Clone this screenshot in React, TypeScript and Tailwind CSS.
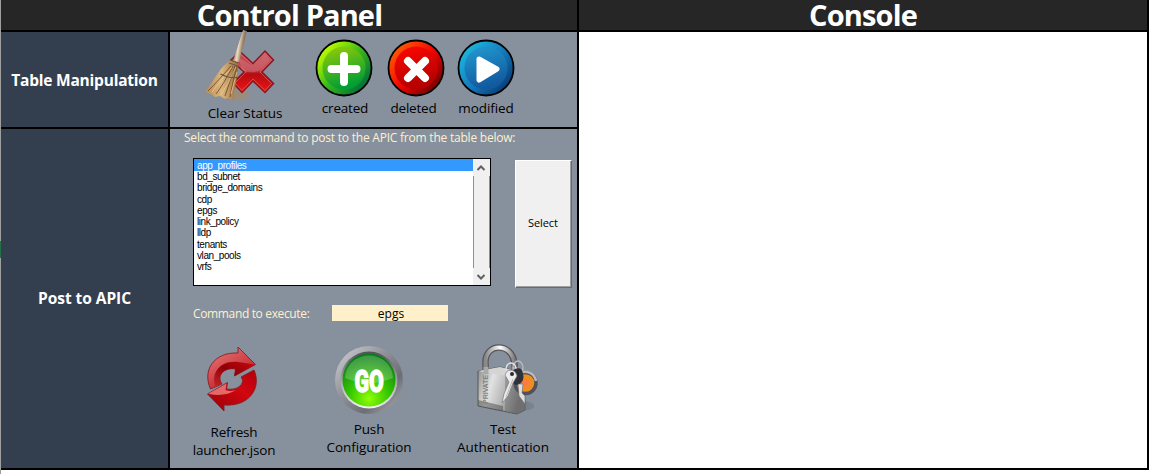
import { useState, type ReactNode } from "react";

const commands = [
  "app_profiles",
  "bd_subnet",
  "bridge_domains",
  "cdp",
  "epgs",
  "link_policy",
  "lldp",
  "tenants",
  "vlan_pools",
  "vrfs",
];

function BroomIcon() {
  return (
    <svg width="72" height="76" viewBox="203 28 72 76" className="block">
      <defs>
        <linearGradient id="crossRed" x1="0" y1="0" x2="0" y2="1">
          <stop offset="0" stopColor="#c4545c" />
          <stop offset="0.48" stopColor="#bd3a44" />
          <stop offset="0.55" stopColor="#b50c12" />
          <stop offset="1" stopColor="#ed1515" />
        </linearGradient>
        <linearGradient id="handle" x1="0" y1="0" x2="1" y2="0.35">
          <stop offset="0.3" stopColor="#9a7f66" />
          <stop offset="0.5" stopColor="#ecdcc0" />
          <stop offset="0.8" stopColor="#8d755c" />
        </linearGradient>
        <linearGradient id="straw" x1="0" y1="0" x2="1" y2="0">
          <stop offset="0" stopColor="#b98a50" />
          <stop offset="0.5" stopColor="#dcb67d" />
          <stop offset="1" stopColor="#9c6d3b" />
        </linearGradient>
        <radialGradient id="dust">
          <stop offset="0" stopColor="#a58a6b" />
          <stop offset="1" stopColor="#a58a6b" stopOpacity="0" />
        </radialGradient>
      </defs>
      <ellipse cx="239" cy="95" rx="14" ry="8" fill="url(#dust)" />
      <path d="M240 51.500 L253 63.500 L265 51 L273.500 60 L262 72 L273.500 83.500 L265 92.500 L253 81 L242 92.500 L233 83 L244 72 L231 60Z" fill="url(#crossRed)" stroke="#8e1620" strokeWidth="1.500" />
      <path d="M240 53.500 L253 65.500 L265 53 L271.500 60 L260 72 L271.500 83.500 L265 90.500 L253 79 L242 90.500 L235 83 L246 72 L233 60Z" fill="none" stroke="#e39088" strokeWidth="0.600" opacity="0.800" />
      <path d="M238 57 L253 66 L265 54 L270 60 L262 69 Q253 75 242 70Z" fill="#fff" opacity="0.14" />
      <path d="M243 30 L247 31 L239 62 L233 61Z" fill="url(#handle)" />
      <path d="M231 60 L238 62.500 C239 73 235 85 233 100 L228 98 L225 99 L220 96 L215 97 L211 94 L205 92 C214 81 220 66 231 60Z" fill="url(#straw)" />
      <path d="M231 66 Q218 81 208 91 M233 66 Q223 85 216 94 M235 66 Q230 82 225 96 M237 66 Q232 85 230 97" stroke="#75502c" strokeWidth="0.900" fill="none" />
      <path d="M232 67 Q221 80 212 92 M236 67 Q228 84 221 95 M237 72 L231 94" stroke="#ecd09c" strokeWidth="0.700" fill="none" />
      <path d="M230 60 L238 63 M229 63 L238 66 M220.500 74 Q229 78.500 237 77.500" stroke="#68584b" strokeWidth="1.300" fill="none" />
    </svg>
  );
}

function OrbIcon({ id, colors, children }: { id: string; colors: string[]; children: ReactNode }) {
  return (
    <svg width="58" height="58" viewBox="-29 -29 58 58" className="block">
      <defs>
        <linearGradient id={id + "rim"} x1="0.12" y1="0.15" x2="0.88" y2="0.85">
          <stop offset="0" stopColor={colors[0]} />
          <stop offset="0.5" stopColor={colors[1]} />
          <stop offset="1" stopColor={colors[2]} />
        </linearGradient>
        <linearGradient id={id + "in"} x1="0" y1="0" x2="0.3" y2="1">
          <stop offset="0" stopColor={colors[3]} />
          <stop offset="1" stopColor={colors[4]} />
        </linearGradient>
      </defs>
      <circle r="27.500" fill={"url(#" + id + "rim)"} stroke="#030303" strokeWidth="1.800" />
      <circle r="21.500" fill={"url(#" + id + "in)"} />
      {children}
    </svg>
  );
}

function RefreshIcon() {
  return (
    <svg width="52" height="68" viewBox="206 345 52 68" className="block">
      <defs>
        <linearGradient id="refreshTop" x1="0" y1="0" x2="0.7" y2="1">
          <stop offset="0" stopColor="#e98080" />
          <stop offset="0.5" stopColor="#d34a4e" />
          <stop offset="1" stopColor="#b8141b" />
        </linearGradient>
        <linearGradient id="refreshBottom" x1="0" y1="1" x2="1" y2="0">
          <stop offset="0" stopColor="#960007" />
          <stop offset="0.6" stopColor="#d10610" />
          <stop offset="1" stopColor="#b30009" />
        </linearGradient>
        <linearGradient id="refreshInner" x1="0" y1="1" x2="1" y2="0">
          <stop offset="0" stopColor="#c5232a" />
          <stop offset="0.5" stopColor="#900006" />
          <stop offset="1" stopColor="#c90810" />
        </linearGradient>
      </defs>
      <path d="M210.500 389 C202 370 214 352 238 353 V347 L255.500 364.500 L234.500 376 L235.500 369 C224 367 216 376 222 384Z" fill="url(#refreshTop)" stroke="#861e25" strokeWidth="0.900" />
      <path d="M215 386 C211 372 221 360 238 362 L255 364.500 L234.500 376 L235.500 369 C224 367 216 376 222 384Z" fill="url(#refreshInner)" />
      <path d="M254 370 C262 388 249 407 224 405 L224 411 L207.500 394 L227.500 382.500 L226.500 389 C238 391 246 383 241 377Z" fill="url(#refreshBottom)" stroke="#861e25" strokeWidth="0.900" />
      <path d="M208.500 393.500 L226.500 383.500 L225.500 390 Q230 392 236 390 Q225 397 209 394Z" fill="#ec7a78" opacity="0.850" />
    </svg>
  );
}

function GoIcon() {
  return (
    <svg width="70" height="70" viewBox="-35 -35 70 70" className="block">
      <defs>
        <linearGradient id="goRim" x1="0" y1="0" x2="1" y2="1">
          <stop offset="0" stopColor="#d3d5d9" />
          <stop offset="0.4" stopColor="#92949a" />
          <stop offset="0.7" stopColor="#6c6e75" />
          <stop offset="1" stopColor="#b8babf" />
        </linearGradient>
        <linearGradient id="goEdge" x1="0" y1="0" x2="0" y2="1">
          <stop offset="0" stopColor="#505258" />
          <stop offset="1" stopColor="#f2f3f2" />
        </linearGradient>
        <radialGradient id="goFace" cx="0.5" cy="0.85" r="0.8">
          <stop offset="0" stopColor="#8dff08" />
          <stop offset="0.45" stopColor="#39c900" />
          <stop offset="1" stopColor="#087c16" />
        </radialGradient>
      </defs>
      <circle r="34" fill="url(#goRim)" />
      <circle r="28.500" fill="url(#goEdge)" />
      <circle r="26.500" fill="url(#goFace)" />
      <path d="M-24 -2 C-22 -32 22 -32 24 -2 Q0 8 -24 -2Z" fill="#fff" opacity="0.220" />
      <text x="0" y="11.500" textAnchor="middle" textLength="29" lengthAdjust="spacingAndGlyphs" fontFamily="Roboto, sans-serif" fontWeight="900" fontSize="32" fill="#fff" stroke="#fff" strokeWidth="1.300">GO</text>
    </svg>
  );
}

function LockIcon() {
  return (
    <svg width="64" height="72" viewBox="476 344 64 72" className="block">
      <defs>
        <linearGradient id="lockFace" x1="0" y1="0" x2="1" y2="0.3">
          <stop offset="0" stopColor="#8c8c8c" />
          <stop offset="0.35" stopColor="#e2e2e2" />
          <stop offset="0.65" stopColor="#b8b8b8" />
          <stop offset="1" stopColor="#666" />
        </linearGradient>
        <linearGradient id="shackle" x1="0" y1="0" x2="1" y2="0">
          <stop offset="0" stopColor="#888" />
          <stop offset="0.5" stopColor="#fff" />
          <stop offset="1" stopColor="#777" />
        </linearGradient>
        <radialGradient id="amber">
          <stop offset="0" stopColor="#ff7847" />
          <stop offset="1" stopColor="#e59909" />
        </radialGradient>
      </defs>
      <ellipse cx="522" cy="406" rx="12" ry="5" fill="#68747f" opacity="0.500" />
      <path d="M486 374 L485.500 364 C484 342 513 342 514.500 364 L515 374" fill="none" stroke="#55555a" strokeWidth="6.500" />
      <path d="M486 374 L485.500 364 C484 342 513 342 514.500 364 L515 374" fill="none" stroke="url(#shackle)" strokeWidth="4" />
      <path d="M478 371 L500 367 L524 373 L525 410 L517 414 L478 406Z" fill="url(#lockFace)" stroke="#55585b" strokeWidth="1" />
      <path d="M478 371 L500 367 L524 373 L506 376Z" fill="#d4d4d4" />
      <path d="M505 377 V411 L517 414 L525 410 V374Z" fill="#777" opacity="0.500" />
      <path d="M478 400 L503 406 V411 L478 406Z" fill="#4b4b4b" opacity="0.500" />
      <path d="M486 374 V367 M515 374 V367" stroke="#a8a8aa" strokeWidth="5" />
      <text transform="translate(487.500 404) rotate(-90)" textLength="29" lengthAdjust="spacingAndGlyphs" fontFamily="Liberation Sans, sans-serif" fontSize="8" fontWeight="700" fill="#85807a">PRIVATE</text>
      <circle cx="525.500" cy="383" r="10.500" fill="url(#amber)" stroke="#50515a" strokeWidth="3.500" />
      <path d="M520 373 A11 11 0 0 1 536 381" fill="none" stroke="#b9b9bd" strokeWidth="2.500" />
      <ellipse cx="518" cy="368" rx="5" ry="7" fill="none" stroke="#b9babd" strokeWidth="1.400" />
      <ellipse cx="511" cy="369" rx="5" ry="6" fill="none" stroke="#e4e4e4" strokeWidth="1.300" />
      <path d="M513 370 Q522 365 523 374 Q525 380 519 385 Q514 386 511 380Z" fill="#303139" />
      <path d="M507 371 Q515 368 517 376 L513 383 L508 396 L502 403 L504 394 L509 382 L505 375Z" fill="#ececec" stroke="#7b7d80" strokeWidth="0.700" />
      <path d="M518 384 L523 384 L522 393 L525 396 L525 404 L519 396Z" fill="#dfdfe0" stroke="#696a6d" strokeWidth="0.600" />
      <circle cx="512" cy="374" r="2" fill="#292a2e" />
      <path d="M506 397 L513 379" stroke="#aaa" strokeWidth="0.800" />
    </svg>
  );
}

export default function App() {
  const [selected, setSelected] = useState(0);
  const [command, setCommand] = useState("epgs");

  return (
    <main className="flex h-[474px] w-[1154px] bg-white font-['Open_Sans',sans-serif] text-black">
      <div className="w-px shrink-0 bg-[#a0a0a0] pt-[241px]">
        <div className="h-[17px] bg-[#217346]" />
      </div>
      <div className="grid h-[470px] w-[1148px] grid-cols-[576px_568px] grid-rows-[30px_436px] gap-[2px] bg-black pr-[2px] pb-[2px]">
        <h1 className="bg-[#262626] pl-[1px] text-center text-[29px] leading-[30px] font-bold tracking-[-0.85px] text-white">Control Panel</h1>
        <h1 className="bg-[#262626] text-center text-[29px] leading-[30px] font-bold tracking-[-0.85px] text-white">Console</h1>
        <section className="grid grid-cols-[167px_407px] grid-rows-[95px_339px] gap-[2px]">
          <h2 className="flex items-center justify-center bg-[#333f4f] pt-[2px] text-[15.5px] font-bold tracking-[-0.22px] whitespace-nowrap text-white">Table Manipulation</h2>
          <div className="flex bg-[#86919d] text-[13.5px] tracking-[-0.2px]">
            <button className="-mt-1 ml-[33px] flex w-[84px] flex-col items-start">
              <BroomIcon />
              <span className="w-full text-center leading-[18px] tracking-[-0.05px] whitespace-nowrap">Clear Status</span>
            </button>
            <button className="mt-[7px] ml-[28px] flex w-[58px] flex-col items-center">
              <OrbIcon id="created" colors={["#bfff00", "#39b71a", "#006e3a", "#9bce00", "#009f35"]}>
                <path d="M0 -12 V14 M-12.500 1 H12.500" stroke="#fff" strokeWidth="8" strokeLinecap="round" />
              </OrbIcon>
              <span className="mt-[2px] ml-[2px] leading-[18px]">created</span>
            </button>
            <button className="mt-[7px] ml-[14px] flex w-[58px] flex-col items-center">
              <OrbIcon id="deleted" colors={["#ff5a00", "#f50500", "#760000", "#ff0800", "#b50000"]}>
                <path d="M-8 -7 L9 10 M9 -7 L-8 10" stroke="#fff" strokeWidth="8" strokeLinecap="round" />
              </OrbIcon>
              <span className="mt-[2px] mr-[5px] leading-[18px]">deleted</span>
            </button>
            <button className="mt-[7px] ml-[12px] flex w-[58px] flex-col items-center">
              <OrbIcon id="modified" colors={["#1db5dc", "#147dc0", "#083d79", "#219cd1", "#125a9f"]}>
                <path d="M-7 -9 L11 1 L-7 12Z" fill="#fff" stroke="#fff" strokeWidth="5" strokeLinejoin="round" />
              </OrbIcon>
              <span className="mt-[2px] leading-[18px] tracking-[-0.1px]">modified</span>
            </button>
          </div>
          <h2 className="flex items-center justify-center bg-[#333f4f] text-[15.5px] font-bold tracking-[-0.05px] text-white">Post to APIC</h2>
          <div className="bg-[#86919d]">
            <p className="h-[29px] pl-[14px] text-[12px] leading-[17px] tracking-[-0.22px] whitespace-nowrap text-[#fff0cf]">Select the command to post to the APIC from the table below:</p>
            <div className="flex pl-[23px]">
              <div className="flex h-[128px] w-[298px] border border-black bg-white">
                <ul className="w-[279px] font-['Liberation_Sans',sans-serif] text-[10px] leading-[11.25px] tracking-[-0.42px]">
                  {commands.map((name, index) => (
                    <li key={name} onClick={() => setSelected(index)} className={index === selected ? "h-[12px] bg-[#3399ff] pt-px pl-[3px] text-white" : "h-[11.25px] pl-[3px]"}>{name}</li>
                  ))}
                </ul>
                <div className="flex w-[17px] flex-col justify-between bg-[#f0f0f0]">
                  <svg width="17" height="17" viewBox="0 0 17 17"><path d="M4.500 11 L8 7.500 L11.500 11" fill="none" stroke="#606060" strokeWidth="2" /></svg>
                  <div className="h-[92px] border-x border-[#86919d]" />
                  <svg width="17" height="17" viewBox="0 0 17 17"><path d="M4.500 7 L8 10.500 L11.500 7" fill="none" stroke="#606060" strokeWidth="2" /></svg>
                </div>
              </div>
              <button onClick={() => setCommand(commands[selected])} className="mt-[2px] ml-6 h-[128px] w-[57px] border border-t-white border-r-[#696969] border-b-[#696969] border-l-white bg-[#f0f0f0] pr-px pb-[2px] text-[11px] tracking-[-0.1px] shadow-[inset_-1px_-1px_#a0a0a0]">Select</button>
            </div>
            <div className="mt-[17px] flex h-4 pl-[23px] text-[12px] leading-[18px]">
              <label className="w-[139px] tracking-[-0.35px] text-[#fff0cf]">Command to execute:</label>
              <output className="w-[116px] bg-[#fff0cc] pl-0.5 text-center text-[12px]">{command}</output>
            </div>
            <div className="flex pt-[23px] text-[13.5px] leading-[18px] tracking-[-0.2px]">
              <button className="mt-px ml-[14px] flex w-[100px] flex-col items-center">
                <span className="mr-[5px]"><RefreshIcon /></span>
                <span className="mt-[10px]">Refresh<br />launcher.json</span>
              </button>
              <button className="ml-[35px] flex w-[100px] flex-col items-center">
                <span className="mt-px"><GoIcon /></span>
                <span className="mt-[5px] tracking-[-0.1px]">Push<br />Configuration</span>
              </button>
              <button className="ml-[34px] flex w-[100px] flex-col items-center">
                <span className="ml-[10px]"><LockIcon /></span>
                <span className="mt-[4px] tracking-[-0.05px]">Test<br />Authentication</span>
              </button>
            </div>
          </div>
        </section>
        <section aria-label="Console output" className="bg-white" />
      </div>
    </main>
  );
}
